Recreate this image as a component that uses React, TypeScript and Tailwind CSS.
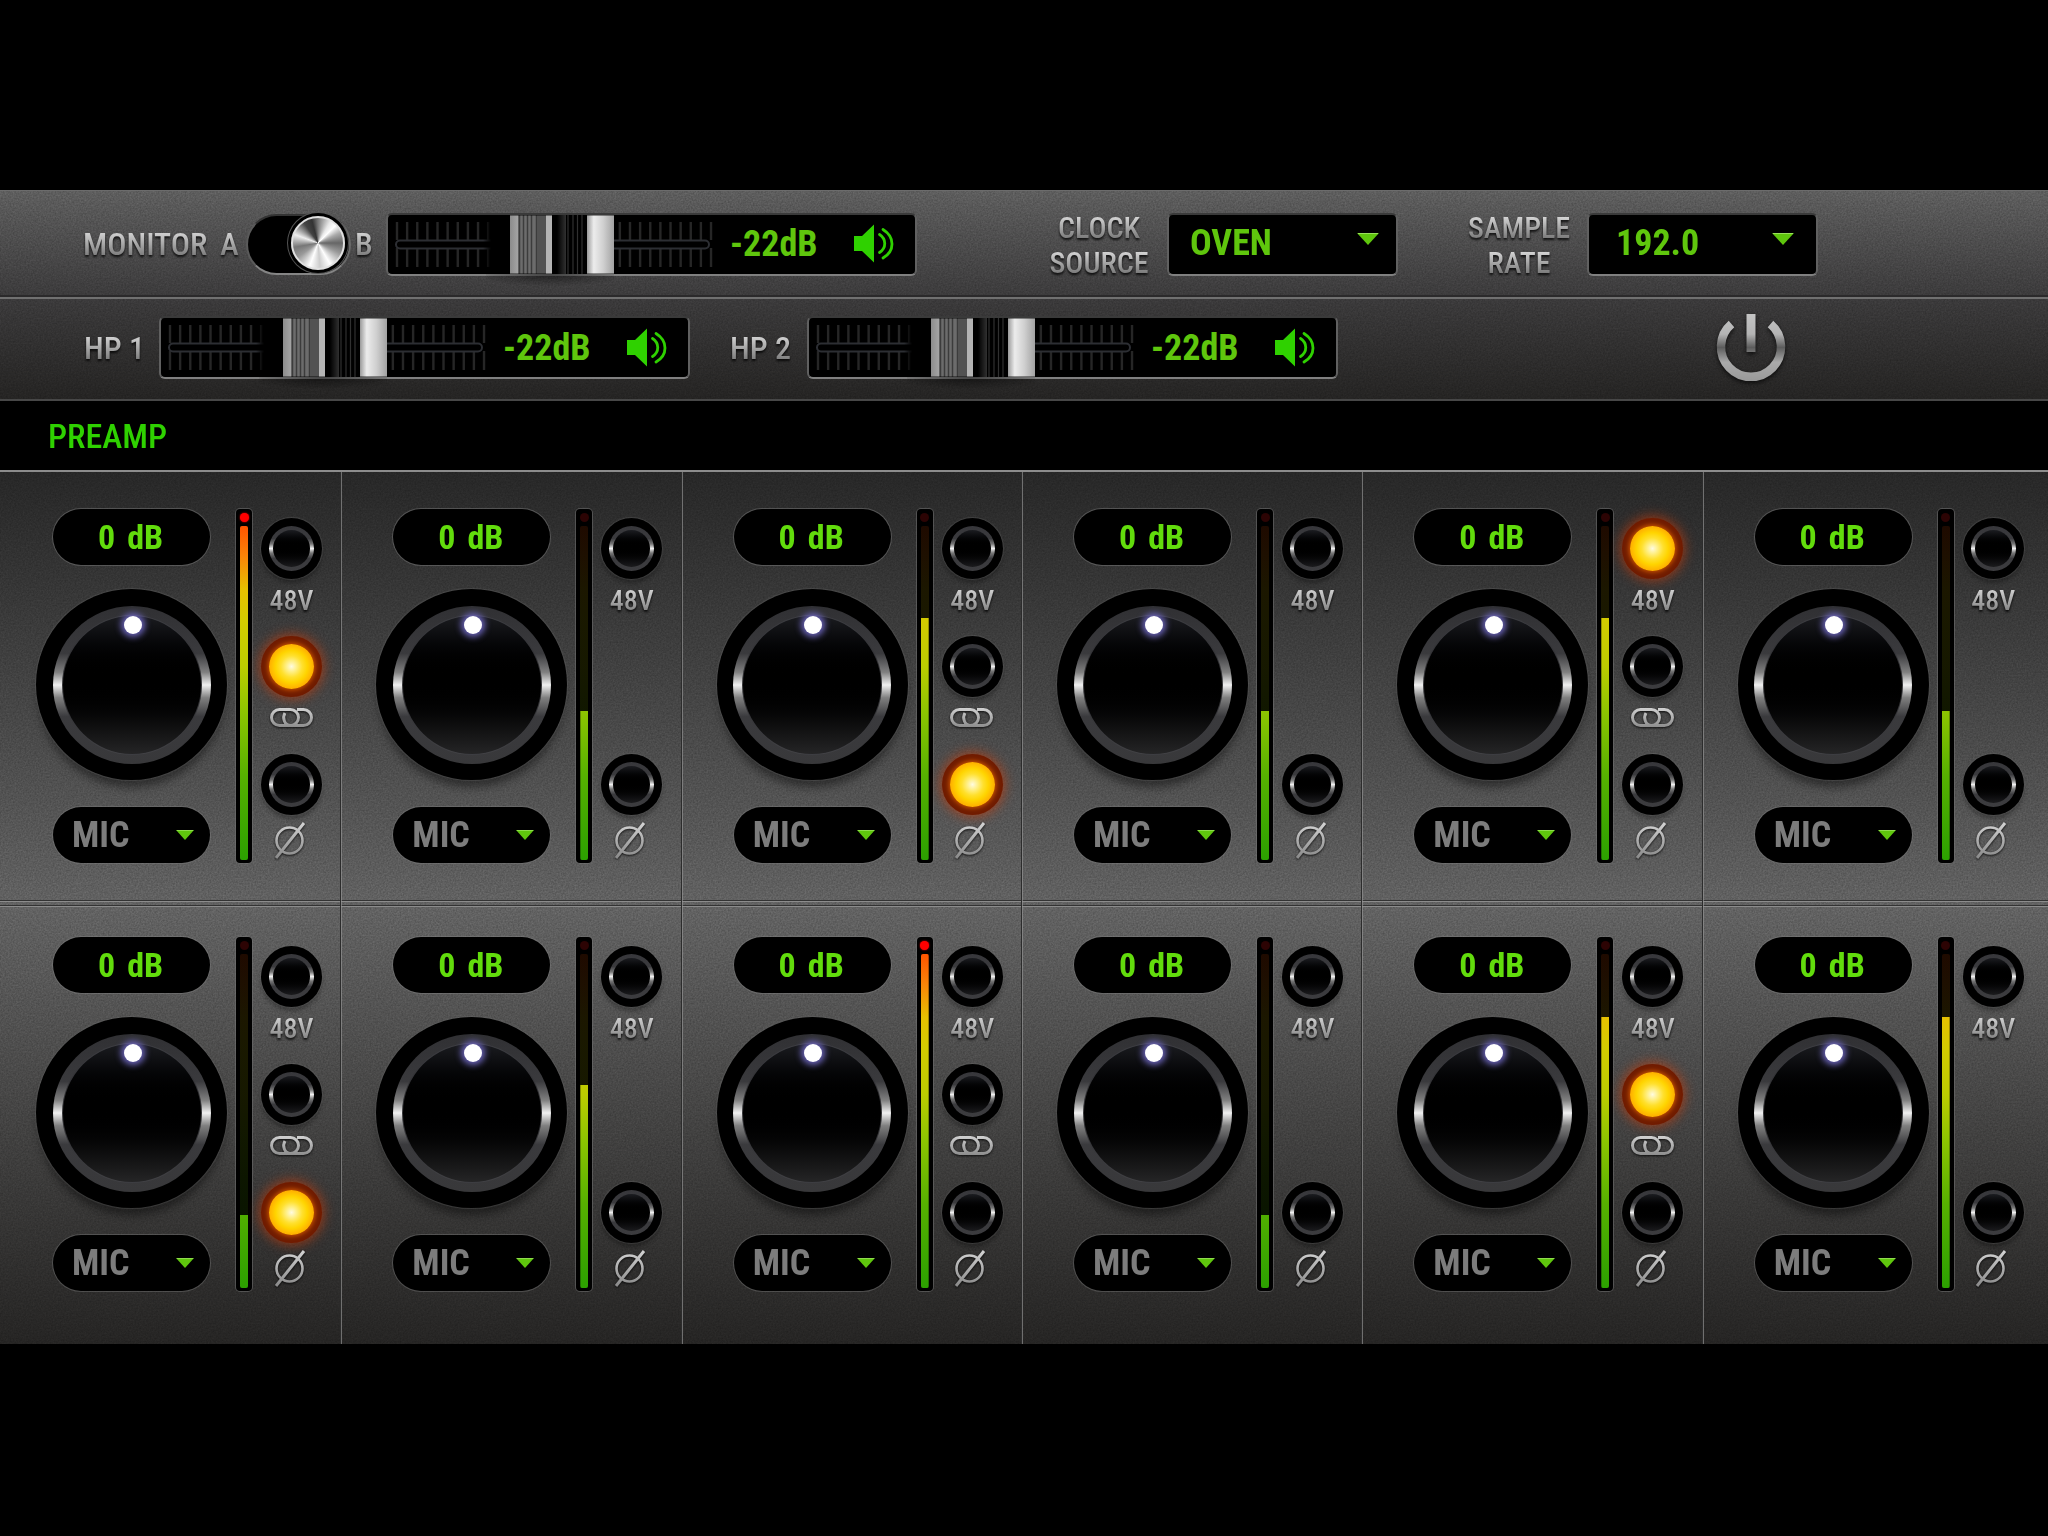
import React, { useId, useState } from "react";

type LedKey = "phantom" | "link" | "phase";

interface Channel {
  id: number;
  level: number;
  clip?: boolean;
  hasLink: boolean;
  active?: LedKey;
}

const METER_RANGE = 334;

const ROWS: Channel[][] = [
  [
    { id: 1, level: 334, clip: true, hasLink: true, active: "link" },
    { id: 2, level: 149, hasLink: false },
    { id: 3, level: 242, hasLink: true, active: "phase" },
    { id: 4, level: 149, hasLink: false },
    { id: 5, level: 242, hasLink: true, active: "phantom" },
    { id: 6, level: 149, hasLink: false },
  ],
  [
    { id: 7, level: 73, hasLink: true, active: "phase" },
    { id: 8, level: 203, hasLink: false },
    { id: 9, level: 334, clip: true, hasLink: true },
    { id: 10, level: 73, hasLink: false },
    { id: 11, level: 271, hasLink: true, active: "link" },
    { id: 12, level: 271, hasLink: false },
  ],
];

const METAL =
  "font-medium bg-linear-to-b from-[#d4d4d4] from-20% to-[#7c7c7c] to-80% bg-clip-text text-transparent [filter:drop-shadow(0_2px_1px_rgba(0,0,0,0.8))]";

function Grain() {
  const id = useId();
  return (
    <svg aria-hidden="true" className="pointer-events-none absolute inset-0 size-full opacity-20 mix-blend-overlay">
      <filter id={id} colorInterpolationFilters="sRGB">
        <feTurbulence type="fractalNoise" baseFrequency="0.6" numOctaves="2" stitchTiles="stitch" />
        <feColorMatrix type="matrix" values="1 0 0 0 -0.05  1 0 0 0 -0.05  1 0 0 0 -0.05  0 0 0 0 1" />
      </filter>
      <rect width="100%" height="100%" filter={`url(#${id})`} />
    </svg>
  );
}

function Arrow({ className }: { className: string }) {
  return (
    <svg aria-hidden="true" viewBox="0 0 22 12" className={className}>
      <path d="M0 0H22L11 12Z" fill="#5fc60d" />
      <path d="M1 0.5H21" stroke="#9be05c" strokeWidth="1" />
    </svg>
  );
}

function Speaker() {
  return (
    <svg aria-hidden="true" viewBox="0 0 40 40" className="h-10 w-10">
      <path d="M0 12H8L20 0.500V38.500L8 27H0Z" fill="#2fd100" />
      <path d="M25.500 10.500C32.500 15 32.500 24 25.500 28.500" fill="none" stroke="#2fd100" strokeWidth="2.800" strokeLinecap="round" />
      <path d="M29 5.500C41 13 41 27 29 34" fill="none" stroke="#2fd100" strokeWidth="2.800" strokeLinecap="round" />
    </svg>
  );
}

function FaderDrawing() {
  const id = useId();
  const ticks = Array.from({ length: 32 }, (_, i) => 11 + i * 10.13);
  return (
    <svg aria-hidden="true" viewBox="2 0 333 59" className="block h-full w-[333px]">
      <defs>
        <linearGradient id={`${id}a`}>
          <stop offset="0" stopColor="#8c8c8c" />
          <stop offset="1" stopColor="#a4a4a4" />
        </linearGradient>
        <linearGradient id={`${id}b`}>
          <stop offset="0" stopColor="#9a9a9a" />
          <stop offset="0.25" stopColor="#ececec" />
          <stop offset="0.6" stopColor="#d0d0d0" />
          <stop offset="1" stopColor="#a2a2a2" />
        </linearGradient>
        <linearGradient id={`${id}c`}>
          <stop offset="0" stopColor="#000" />
          <stop offset="1" stopColor="#303030" />
        </linearGradient>
        <linearGradient id={`${id}d`}>
          <stop offset="0" stopColor="#000" stopOpacity="0" />
          <stop offset="0.3" stopColor="#000" />
        </linearGradient>
      </defs>
      {ticks.map((x) => (
        <path key={x} d={`M${x} 7V25M${x} 33V52`} stroke="#262626" strokeWidth="2.4" />
      ))}
      <rect x="10" y="25.5" width="313" height="8" rx="4" fill="#000" stroke="#2c2e33" strokeWidth="2" />
      <rect x="97" y="0" width="27" height="59" fill={`url(#${id}d)`} />
      <rect x="123" y="0" width="105" height="59" fill="#000" />
      <rect x="124" y="0" width="42" height="59" fill="#6c6c6c" />
      <rect x="124" y="0" width="8" height="59" fill={`url(#${id}a)`} />
      <path d="M133.500 0V59M137.500 0V59M141.500 0V59M145.500 0V59M150.500 0V59" stroke="#3c3c3c" strokeWidth="1.500" />
      <rect x="151" y="0" width="9" height="59" fill="#525252" />
      <rect x="160" y="0" width="6" height="59" fill="#b4b4b4" />
      <rect x="171" y="0" width="9" height="59" fill={`url(#${id}c)`} />
      <path d="M182 0V59M187 0V59M191.500 0V59M196 0V59" stroke="#303030" strokeWidth="1.200" />
      <rect x="201" y="0" width="27" height="59" fill={`url(#${id}b)`} />
      <path d="M124 0.5H166M201 0.500H228M124 58.500H166M201 58.500H228" stroke="#000" strokeOpacity="0.400" />
    </svg>
  );
}

function Fader({ label }: { label: string }) {
  return (
    <div className="relative flex h-[63px] w-[531px] shrink-0 items-center rounded-md border-2 border-t-[#3a3a3a] border-r-[#606060] border-b-[#808080] border-l-[#606060] bg-black">
      <div className="relative h-full w-[342px] shrink-0 before:absolute before:top-full before:left-[98px] before:h-3 before:w-[128px] before:bg-radial-[ellipse_60%_100%_at_50%_0%] before:from-black/50 before:to-transparent">
        <FaderDrawing />
        <input
          type="range"
          min={-60}
          max={0}
          defaultValue={-22}
          aria-label={`${label} volume`}
          className="absolute inset-0 size-full cursor-pointer opacity-0"
        />
      </div>
      <output className="w-[84px] text-center text-[36px] leading-10 font-bold whitespace-nowrap text-[#5fc60d]">-22dB</output>
      <button type="button" aria-label={`Mute ${label}`} className="ml-10 cursor-pointer">
        <Speaker />
      </button>
    </div>
  );
}

function HeaderSelect({ label, lines, value, options, pad, arrow }: { label: string; lines: string[]; value: string; options: string[]; pad: string; arrow: string }) {
  const id = useId();
  return (
    <div className="flex shrink-0 items-center">
      <label htmlFor={id} aria-label={label} className="flex w-32 flex-col items-center pt-0.5 pr-2 text-[30px] leading-[35px]">
        {lines.map((line) => (
          <span key={line} className={METAL}>{line}</span>
        ))}
      </label>
      <div className="relative">
        <select
          id={id}
          defaultValue={value}
          className={`block h-[63px] w-[231px] cursor-pointer appearance-none rounded-md border-2 border-t-[#3a3a3a] border-r-[#606060] border-b-[#808080] border-l-[#606060] bg-black pb-0.5 text-[36px] font-bold text-[#5fc60d] ${pad}`}
        >
          {options.map((o) => (
            <option key={o}>{o}</option>
          ))}
        </select>
        <Arrow className={`pointer-events-none absolute top-5 h-3 w-[22px] ${arrow}`} />
      </div>
    </div>
  );
}

function MonitorSwitch() {
  const [b, setB] = useState(true);
  return (
    <button
      type="button"
      role="switch"
      aria-checked={b}
      aria-label="Monitor A or B"
      onClick={() => setB(!b)}
      className={`flex h-[61px] w-[105px] shrink-0 cursor-pointer rounded-full border-2 border-t-[#333] border-r-[#6a6a6a] border-b-[#858585] border-l-[#5a5a5a] bg-black px-1 ${b ? "justify-end" : "justify-start"}`}
    >
      <span className="size-[54px] rounded-full border-2 border-[#e0e0e0] bg-[conic-gradient(#777,#e8e8e8_30deg,#fff_45deg,#aaa_65deg,#666_90deg,#999_115deg,#fff_150deg,#ccc_175deg,#fff_200deg,#999_235deg,#777_260deg,#eee_290deg,#444_325deg,#333_345deg,#777)] shadow-[0_0_0_3px_#000,0_0_0_4px_#555]" />
    </button>
  );
}

function PowerIcon() {
  const id = useId();
  return (
    <svg aria-hidden="true" viewBox="0 0 70 70" className="size-[70px] [filter:drop-shadow(0_2px_2px_rgba(0,0,0,0.7))]">
      <defs>
        <linearGradient id={id} gradientUnits="userSpaceOnUse" x1="0" y1="1" x2="0" y2="68">
          <stop offset="0" stopColor="#c4c4c4" />
          <stop offset="0.3" stopColor="#b4b4b4" />
          <stop offset="0.5" stopColor="#5c5c5c" />
          <stop offset="0.72" stopColor="#aaa" />
          <stop offset="1" stopColor="#999" />
        </linearGradient>
      </defs>
      <rect x="30.500" y="1" width="9" height="38" fill={`url(#${id})`} />
      <path d="M15.500 11A30 30 0 1 0 54.500 11" fill="none" stroke={`url(#${id})`} strokeWidth="8.500" />
    </svg>
  );
}

function Led({ on, label }: { on: boolean; label: string }) {
  const [lit, setLit] = useState(on);
  if (lit) {
    return (
      <button
        type="button"
        aria-pressed="true"
        aria-label={label}
        onClick={() => setLit(false)}
        className="flex size-[61px] cursor-pointer items-center justify-center rounded-full bg-[#701c00] shadow-[0_0_12px_2px_rgba(200,60,10,0.65)]"
      >
        <span className="size-[45px] rounded-full bg-[radial-gradient(circle,#fffbe0_0,#fff08a_16%,#ffe02e_34%,#ffd400_50%,#ffae00_70%)] shadow-[0_0_5px_1px_#d45a00]" />
      </button>
    );
  }
  return (
    <button
      type="button"
      aria-pressed="false"
      aria-label={label}
      onClick={() => setLit(true)}
      className="flex size-[61px] cursor-pointer items-center justify-center rounded-full bg-black shadow-[0_0_1px_1px_rgba(110,110,110,0.35),0_4px_4px_rgba(0,0,0,0.3)]"
    >
      <span className="flex size-[45px] items-center justify-center rounded-full bg-[linear-gradient(to_bottom,#37373b_0%,#3a3a3d_28%,#787878_40%,#f0f0f0_50%,#787878_60%,#3a3a3d_72%,#3c3c3f_100%)]">
        <span className="size-[37px] rounded-full bg-linear-to-b from-[#1c1d21] via-black via-45% to-[#1c1c1e]" />
      </span>
    </button>
  );
}

function IconGradient({ id, y2 }: { id: string; y2: number }) {
  return (
    <linearGradient id={id} gradientUnits="userSpaceOnUse" x1="0" y1="0" x2="0" y2={y2}>
      <stop offset="0" stopColor="#d4d4d4" />
      <stop offset="1" stopColor="#868686" />
    </linearGradient>
  );
}

function LinkIcon() {
  const id = useId();
  return (
    <svg aria-hidden="true" viewBox="0 0 46 22" className="h-[22px] w-[46px] [filter:drop-shadow(0_1px_1px_rgba(0,0,0,0.8))]">
      <defs>
        <IconGradient id={id} y2={22} />
      </defs>
      <g fill="none" stroke={`url(#${id})`} strokeWidth="3">
        <rect x="2.500" y="2.500" width="27" height="16" rx="8" />
        <path d="M28 2.500H34.500A8 8 0 0 1 34.500 18.500H22C14.500 18.500 13.500 10 16 6" />
      </g>
    </svg>
  );
}

function PhaseIcon() {
  const id = useId();
  return (
    <svg aria-hidden="true" viewBox="0 0 32 38" className="h-[38px] w-8 [filter:drop-shadow(0_1px_1px_rgba(0,0,0,0.8))]">
      <defs>
        <IconGradient id={id} y2={38} />
      </defs>
      <g fill="none" stroke={`url(#${id})`} strokeWidth="2.600">
        <circle cx="15.500" cy="18.500" r="13" />
        <path d="M2 36L30 1" strokeWidth="3" />
      </g>
    </svg>
  );
}

function Meter({ level, clip }: { level: number; clip?: boolean }) {
  const scale = "bg-[linear-gradient(to_bottom,#ff5400_0%,#fa8408_9%,#e6c000_19%,#d4cc00_28%,#bccc00_42%,#8cc400_56%,#56b000_75%,#2ca000_100%)]";
  return (
    <div
      role="meter"
      aria-label="Level"
      aria-valuemin={0}
      aria-valuemax={METER_RANGE}
      aria-valuenow={level}
      className="flex h-[354px] w-4 flex-col items-center rounded-sm bg-black pt-1 shadow-[0_0_0_1px_rgba(120,120,120,0.5)]"
    >
      <span className={`size-[9px] rounded-full ${clip ? "bg-[#ff0000] shadow-[0_0_2px_#f00]" : "bg-[#2c0404]"}`} />
      <div className="relative mt-1 h-[334px] w-2 overflow-hidden rounded-xs">
        <div className={`absolute inset-0 opacity-12 ${scale}`} />
        <div className={`absolute inset-0 ${scale}`} style={{ clipPath: `inset(${METER_RANGE - level}px 0 0 0)` }} />
      </div>
    </div>
  );
}

function Knob({ id }: { id: number }) {
  return (
    <div className="relative flex size-[191px] items-center justify-center rounded-full bg-black shadow-[0_0_1px_1px_rgba(110,110,110,0.35),0_10px_10px_-3px_rgba(0,0,0,0.45)]">
      <div className="flex size-[158px] items-center justify-center rounded-full bg-[linear-gradient(to_bottom,#303033_0%,#3a3a3d_30%,#808080_42%,#f0f0f0_50%,#808080_58%,#3a3a3d_70%,#38383a_100%)]">
        <div className="flex size-[140px] justify-center rounded-full border border-[#55555a]/60 bg-linear-to-b from-[#1b1c20] via-black via-45% to-[#252526]">
          <span className="ml-[2px] size-[18px] rounded-full bg-white shadow-[0_0_6px_3px_#6a63b8]" />
        </div>
      </div>
      <input
        type="range"
        min={-20}
        max={20}
        defaultValue={0}
        aria-label={`Channel ${id} gain`}
        className="absolute inset-0 size-full cursor-pointer opacity-0"
      />
    </div>
  );
}

function ChannelStrip({ channel }: { channel: Channel }) {
  const { id, level, clip, hasLink, active } = channel;
  return (
    <section
      aria-label={`Channel ${id}`}
      className="flex items-start border-l border-[#2c2c2c] pt-[37px] pl-[35px] shadow-[inset_1px_0_0_rgba(150,150,150,0.65)] first:border-transparent first:shadow-none"
    >
      <div className="flex w-[191px] shrink-0 flex-col items-center">
        <output className="flex h-14 w-[157px] items-center justify-center gap-3 rounded-full bg-black pr-0.5 text-[34px] leading-none font-bold text-[#62dc0c] shadow-[0_0_0_1px_rgba(130,130,130,0.45)]">
          <span>0</span> <span>dB</span>
        </output>
        <div className="mt-6">
          <Knob id={id} />
        </div>
        <div className="relative mt-[27px]">
          <select
            aria-label={`Channel ${id} input`}
            defaultValue="MIC"
            className="block h-14 w-[157px] cursor-pointer appearance-none rounded-full bg-black pl-[19px] text-[36px] font-bold text-[#7c7c7c] shadow-[0_0_0_1px_rgba(130,130,130,0.4)]"
          >
            <option>MIC</option>
            <option>LINE</option>
            <option>HI-Z</option>
          </select>
          <Arrow className="pointer-events-none absolute top-[23px] right-4 h-2.5 w-[18px]" />
        </div>
      </div>
      <div className="ml-[9px]">
        <Meter level={level} clip={clip} />
      </div>
      <div className="mt-[9px] ml-[9px] flex w-[61px] shrink-0 flex-col items-center">
        <div className="flex h-[118px] flex-col items-center">
          <Led on={active === "phantom"} label={`Channel ${id} 48V`} />
          <span className={`mt-0.5 text-[28px] leading-10 ${METAL}`}>48V</span>
        </div>
        <div className="flex h-[118px] flex-col items-center gap-2.5">
          {hasLink && (
            <>
              <Led on={active === "link"} label={`Channel ${id} link`} />
              <LinkIcon />
            </>
          )}
        </div>
        <Led on={active === "phase"} label={`Channel ${id} phase invert`} />
        <div className="mt-[7px] mr-1">
          <PhaseIcon />
        </div>
      </div>
    </section>
  );
}

export default function App() {
  return (
    <div className="flex min-h-screen flex-col justify-center bg-black pb-0.5 font-['Roboto_Condensed','Liberation_Sans_Narrow','Liberation_Sans',sans-serif]">
      <header className="relative bg-linear-to-b from-[#606060] via-[#3d3c3d] to-[#252423]">
        <Grain />
        <div className="relative flex h-[107px] items-center border-t border-b-2 border-t-[#6c6c6c] border-b-[#2b2a2b] pt-0.5 pl-[83px]">
          <span className={`w-[137px] shrink-0 text-[32px] leading-10 ${METAL}`}>MONITOR</span>
          <span className={`w-[26px] shrink-0 text-[32px] leading-10 ${METAL}`}>A</span>
          <MonitorSwitch />
          <span className={`w-[35px] shrink-0 pl-1 text-[32px] leading-10 ${METAL}`}>B</span>
          <Fader label="Monitor" />
          <div className="ml-[122px] flex gap-[61px]">
            <HeaderSelect label="Clock source" lines={["CLOCK", "SOURCE"]} value="OVEN" options={["OVEN", "WORD", "ADAT", "S/PDIF"]} pad="pl-[21px]" arrow="right-[19px]" />
            <HeaderSelect label="Sample rate" lines={["SAMPLE", "RATE"]} value="192.0" options={["44.1", "48.0", "96.0", "192.0"]} pad="pl-[27px]" arrow="right-6" />
          </div>
        </div>
        <div className="relative flex h-[104px] items-center border-t-2 border-b-2 border-t-[#707070] border-b-[#474747] pb-[3px] pl-[84px]">
          <span className={`w-[75px] shrink-0 text-[32px] leading-10 ${METAL}`}>HP 1</span>
          <Fader label="Headphone 1" />
          <span className={`ml-10 w-[77px] shrink-0 text-[32px] leading-10 ${METAL}`}>HP 2</span>
          <Fader label="Headphone 2" />
          <button type="button" aria-label="Power" className="ml-auto mr-[262px] shrink-0 cursor-pointer">
            <PowerIcon />
          </button>
        </div>
      </header>
      <div className="flex h-[71px] items-center border-b-2 border-[#8c8c8c] pl-12">
        <h1 className="text-[34px] leading-10 font-medium text-[#2fd100]">PREAMP</h1>
      </div>
      <main className="relative bg-linear-to-b from-[#282828] via-[#646464] to-[#262524]">
        <Grain />
        <div className="relative grid grid-cols-6 pr-1.5 [&>section]:pb-[37px]">
          {ROWS[0].map((c) => (
            <ChannelStrip key={c.id} channel={c} />
          ))}
        </div>
        <div className="relative -mb-1.5 h-1.5 border-y border-y-[#333] shadow-[0_1px_0_#8c8c8c,inset_0_1px_0_#8c8c8c]" />
        <div className="relative grid grid-cols-6 pr-1.5 [&>section]:pb-[53px]">
          {ROWS[1].map((c) => (
            <ChannelStrip key={c.id} channel={c} />
          ))}
        </div>
      </main>
    </div>
  );
}
